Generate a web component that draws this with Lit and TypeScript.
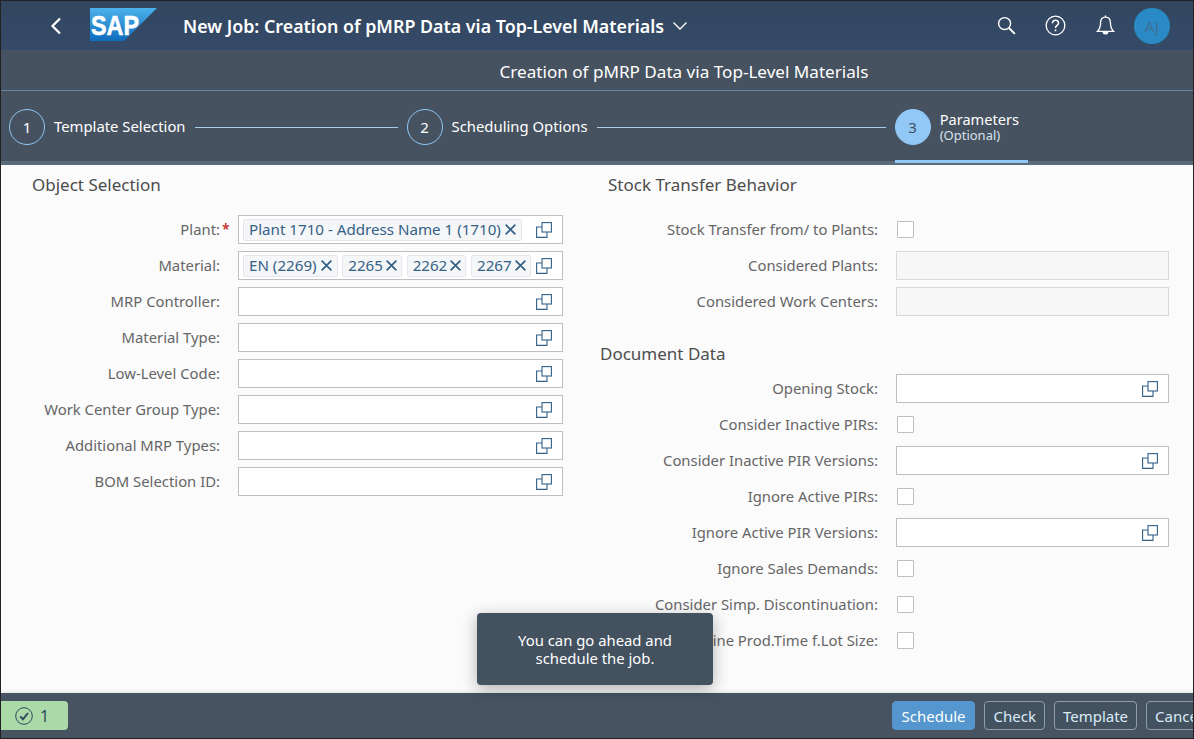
import { LitElement, html, css } from "lit";
import { customElement } from "lit/decorators.js";

const vh = html`<svg class="vh" viewBox="0 0 16 16" width="16" height="16" fill="none" stroke="#346187" stroke-width="1.1"><rect x="6" y=".6" width="9.4" height="9.4"/><path d="M6 5H.6v10.4H11V10"/></svg>`;
const x = html`<svg class="x" viewBox="0 0 12 12" width="13" height="13" stroke="#346187" stroke-width="1.6" fill="none"><path d="M1.5 1.5l9 9M10.5 1.5l-9 9"/></svg>`;

const chip = (t: string) => html`<span class="chip ${t.length <= 4 ? "short" : ""}">${t}${x}</span>`;
const input = (chips: string[] = []) =>
  html`<div class="input"><div class="chips">${chips.map(chip)}</div>${vh}</div>`;
const box = html`<span class="check"></span>`;
const disabled = html`<div class="input disabled"></div>`;

const row = (label: string, ctrl: unknown, req = false) =>
  html`<div class="lab">${label}:${req ? html`<span class="req">*</span>` : ""}</div><div class="ctrl">${ctrl}</div>`;

@customElement("app-root")
export class AppRoot extends LitElement {
  static styles = css`
    :host {
      display: block;
      width: 1194px;
      height: 739px;
      overflow: hidden;
      position: relative;
      font-family: "Noto Sans", sans-serif;
      font-size: 14.85px;
      color: #666;
      background: #fbfbfb;
    }
    * { box-sizing: border-box; }
    .frame {
      height: 739px;
      display: flex;
      flex-direction: column;
      border: 1px solid #222;
    }
    .shell {
      height: 49px;
      flex: none;
      background: linear-gradient(#32465f, #354a68);
      display: flex;
      align-items: center;
      color: #fff;
    }
    .back { margin-left: 49px; display: block; }
    .logo { margin-left: 28px; display: block; margin-top: -1px; }
    .title { margin-left: 25px; font-size: 17.85px; font-weight: 600; white-space: nowrap; }
    .chev { margin-left: 8px; }
    .acts { margin-left: auto; display: flex; align-items: center; }
    .ico { display: block; }
    .search { margin-right: 29px; }
    .help { margin-right: 30px; }
    .bell { margin-right: 19px; }
    .avatar {
      width: 36px; height: 36px; border-radius: 50%;
      background: #2a8ac6; color: #3d6f92; margin-right: 23px;
      display: flex; align-items: center; justify-content: center; font-size: 14.85px;
    }
    .sub {
      height: 41px; flex: none; background: #46525f; color: #fff;
      font-size: 17.1px; display: flex; align-items: center; justify-content: center;
      border-bottom: 1px solid #6588a8; padding: 2px 0 0 174px;
    }
    .wiz {
      height: 74px; flex: none; background: #46525f;
      border-bottom: 4px solid #5c6b7b;
      display: flex; padding-left: 8px; color: #fff;
    }
    .step { display: flex; align-items: center; height: 70px; padding-top: 2px; position: relative; flex: none; }
    .num {
      width: 36px; height: 36px; border-radius: 50%;
      border: 1px solid #91c8f6; color: #fff;
      display: flex; align-items: center; justify-content: center; font-size: 15px; flex: none;
    }
    .num.on { background: #91c8f6; color: #3f5161; }
    .step .txt { margin-left: 9px; white-space: nowrap; padding-bottom: 2px; }
    .line { height: 1px; background: #a9cdea; margin: 2px 9px 0; align-self: center; }
    .line.l1 { width: 203px; }
    .line.l2 { width: 289px; }
    .step .twoline { line-height: 16px; font-size: 14.6px; padding-bottom: 1px; }
    .twoline small { display: block; font-size: 13px; color: #d6e2ec; line-height: 16px; }
    .step.cur { width: 133px; }
    .step.cur::after {
      content: ""; position: absolute; left: 0; right: 0; bottom: -2px; height: 3px; background: #91c8f6;
    }
    .content {
      flex: 1; display: flex; background: #fbfbfb; min-height: 0; padding-top: 8px;
    }
    .colL { width: 562px; flex: none; padding-left: 31px; }
    .colR { margin-left: 37px; flex: none; width: 569px; }
    h3 {
      margin: 0; font-weight: 400; font-size: 17px; color: #4d4d4d; line-height: 24px;
    }
    .colR h3.a { margin-left: 8px; }
    .colR h3.b { margin-top: 26px; margin-bottom: 8px; }
    .grid {
      display: grid; align-items: center; column-gap: 18px; row-gap: 7px; margin-top: 18px;
    }
    .colL .grid { grid-template-columns: 188px 325px; grid-auto-rows: 29px; }
    .colR .grid { grid-template-columns: 278px 273px; grid-auto-rows: 29px; }
    .colR .b + .grid { margin-top: 0; }
    .lab { text-align: right; white-space: nowrap; position: relative; padding-bottom: 2px; }
    .req { color: #c62a2a; position: absolute; left: 100%; margin-left: 2px; top: 0; font-size: 14px; font-weight: 600; }
    .ctrl { display: flex; align-items: center; height: 29px; }
    .input {
      width: 100%; height: 29px; border: 1px solid #bfbfbf; background: #fff;
      display: flex; align-items: center; position: relative; padding-left: 4px;
    }
    .input.disabled { background: #f7f7f7; border-color: #d9d9d9; }
    .chips { flex: 1; display: flex; gap: 4.7px; min-width: 0; overflow: hidden; }
    .chip {
      height: 22px; border: 1px solid #e3e7ec; background: #f5f6f7; border-radius: 2px;
      color: #346187; display: inline-flex; align-items: center; padding: 0 4px 2px 5px; white-space: nowrap; flex: none;
      line-height: 18px; font-size: 15.15px;
    }
    .x { margin: 2px 0 0 3px; display: block; }
    .chip.short { padding-right: 3px; }
    .chip.short .x { margin-left: 2px; }
    .vh { flex: none; margin: 0 10px 0 5px; display: block; }
    .check { width: 17px; height: 17px; margin-left: 1px; border: 1px solid #bfbfbf; background: #fff; display: block; border-radius: 1px; }
    .toast {
      position: absolute; left: 477px; top: 613px; width: 236px; height: 72px;
      background: #44525f; color: #fff; border-radius: 4px;
      display: flex; align-items: center; justify-content: center; text-align: center;
      box-shadow: 0 4px 16px rgba(0,0,0,.3); line-height: 18px; padding: 0 20px;
    }
    .foot {
      height: 45px; flex: none; background: #475361; display: flex; align-items: center; overflow: hidden;
      box-shadow: 0 -1px 4px rgba(0,0,0,.1); position: relative;
    }
    .status {
      width: 67px; height: 29px; background: #abd9a8; border-radius: 0 4px 4px 0;
      display: flex; align-items: center; padding-left: 14px; gap: 7px; color: #2f4a5e; flex: none; font-size: 16px;
    }
    .btns { display: flex; gap: 9px; margin-left: 824px; flex: none; }
    .btn {
      height: 29px; border: 1px solid #8d9eae; border-radius: 4px; color: #d9ecfa;
      background: #44525f; padding: 0 8.5px; display: flex; align-items: center; flex: none; white-space: nowrap; font-size: 15px;
    }
    .btn.tight { padding: 0 7.5px; }
    .btn.pri { background: #5496cd; border-color: #5496cd; color: #fff; }
  `;

  render() {
    return html`<div class="frame">
      <div class="shell">
        <svg class="back" viewBox="0 0 12 18" width="12" height="18" fill="none" stroke="#fff" stroke-width="2.2"><path d="M10 1.5L2.5 9l7.5 7.5"/></svg>
        <svg class="logo" viewBox="0 0 68 34" width="68" height="34">
          <defs><linearGradient id="g" x1="0" y1="0" x2="0" y2="1"><stop offset="0" stop-color="#4cb2ec"/><stop offset="1" stop-color="#0f6cbd"/></linearGradient></defs>
          <polygon points="0,0 67,0 34,33 0,33" fill="url(#g)"/>
          <text x="1" y="27" font-family="Liberation Sans" font-weight="700" font-size="28" fill="#fff" stroke="#fff" stroke-width=".6" textLength="48" lengthAdjust="spacingAndGlyphs">SAP</text>
        </svg>
        <span class="title">New Job: Creation of pMRP Data via Top-Level Materials</span>
        <svg class="chev" viewBox="0 0 16 10" width="16" height="10" fill="none" stroke="#fff" stroke-width="1.3"><path d="M1.5 1.5L8 8l6.5-6.5"/></svg>
        <div class="acts">
          <svg class="ico search" viewBox="0 0 20 20" width="19" height="19" fill="none" stroke="#fff" stroke-width="1.5"><circle cx="8" cy="8" r="6.3"/><path d="M12.6 12.6l6.2 6.2" stroke-width="2"/></svg>
          <svg class="ico help" viewBox="0 0 22 22" width="21" height="21" fill="none" stroke="#fff" stroke-width="1.4"><circle cx="11" cy="11" r="9.8"/><path d="M7.8 8.6c0-2 1.4-3.2 3.2-3.2s3.2 1.2 3.2 3c0 2.4-3.2 2.6-3.2 5.2" stroke-width="1.6"/><path d="M11 15.2v1.8" stroke-width="1.8"/></svg>
          <svg class="ico bell" viewBox="0 0 20 22" width="19" height="21" fill="none" stroke="#fff" stroke-width="1.4"><path d="M10 2.2c-3.4 0-5.2 2.6-5.2 6 0 4.6-.8 6.6-3.3 9h17c-2.5-2.4-3.3-4.4-3.3-9 0-3.4-1.8-6-5.2-6z"/><path d="M10 .4v1.8"/><path d="M7.6 17.8c0 2.6 4.8 2.6 4.8 0" fill="#fff"/></svg>
          <div class="avatar">AJ</div>
        </div>
      </div>
      <div class="sub">Creation of pMRP Data via Top-Level Materials</div>
      <div class="wiz">
        <div class="step"><span class="num">1</span><span class="txt">Template Selection</span></div>
        <div class="line l1"></div>
        <div class="step"><span class="num">2</span><span class="txt">Scheduling Options</span></div>
        <div class="line l2"></div>
        <div class="step cur"><span class="num on">3</span><span class="txt twoline">Parameters<small>(Optional)</small></span></div>
      </div>
      <div class="content">
        <div class="colL">
          <h3>Object Selection</h3>
          <div class="grid">
            ${row("Plant", input(["Plant 1710 - Address Name 1 (1710)"]), true)}
            ${row("Material", input(["EN (2269)", "2265", "2262", "2267"]))}
            ${row("MRP Controller", input())}
            ${row("Material Type", input())}
            ${row("Low-Level Code", input())}
            ${row("Work Center Group Type", input())}
            ${row("Additional MRP Types", input())}
            ${row("BOM Selection ID", input())}
          </div>
        </div>
        <div class="colR">
          <h3 class="a">Stock Transfer Behavior</h3>
          <div class="grid">
            ${row("Stock Transfer from/ to Plants", box)}
            ${row("Considered Plants", disabled)}
            ${row("Considered Work Centers", disabled)}
          </div>
          <h3 class="b">Document Data</h3>
          <div class="grid">
            ${row("Opening Stock", input())}
            ${row("Consider Inactive PIRs", box)}
            ${row("Consider Inactive PIR Versions", input())}
            ${row("Ignore Active PIRs", box)}
            ${row("Ignore Active PIR Versions", input())}
            ${row("Ignore Sales Demands", box)}
            ${row("Consider Simp. Discontinuation", box)}
            ${row("Determine Prod.Time f.Lot Size", box)}
          </div>
        </div>
      </div>
      <div class="foot">
        <div class="status">
          <svg viewBox="0 0 18 18" width="18" height="18" fill="none" stroke="#2f4a5e"><circle cx="9" cy="9" r="8.3" stroke-width="1"/><path d="M5.2 9.3l2.8 2.9 5-6.2" stroke-width="1.9"/></svg>
          <span>1</span>
        </div>
        <div class="btns">
          <div class="btn pri">Schedule</div>
          <div class="btn">Check</div>
          <div class="btn tight">Template</div>
          <div class="btn">Cancel</div>
        </div>
      </div>
      <div class="toast">You can go ahead and schedule the job.</div>
    </div>`;
  }
}
